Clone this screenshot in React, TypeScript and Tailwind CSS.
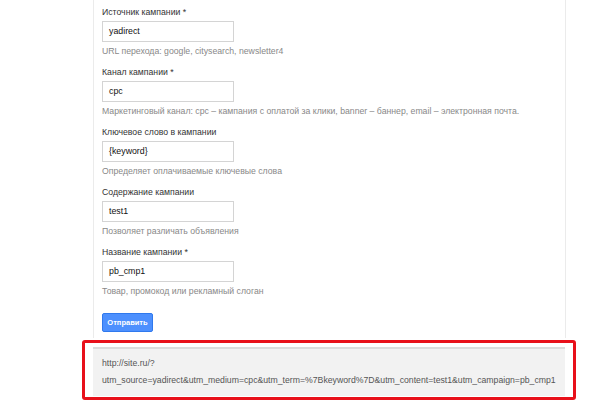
const fields = [
  { label: "Источник кампании", required: true, value: "yadirect", hint: "URL перехода: google, citysearch, newsletter4" },
  { label: "Канал кампании", required: true, value: "cpc", hint: "Маркетинговый канал: cpc – кампания с оплатой за клики, banner – баннер, email – электронная почта." },
  { label: "Ключевое слово в кампании", required: false, value: "{keyword}", hint: "Определяет оплачиваемые ключевые слова" },
  { label: "Содержание кампании", required: false, value: "test1", hint: "Позволяет различать объявления" },
  { label: "Название кампании", required: true, value: "pb_cmp1", hint: "Товар, промокод или рекламный слоган" },
];

export default function App() {
  return (
    <div className="relative w-[604px] h-[403px] overflow-hidden bg-white font-['Liberation_Sans',Arial,sans-serif] text-[8.7px]">
      {/* form panel */}
      <div className="ml-[93px] w-[473px] h-[338px] border-x border-[#ebebeb] pl-[8px] pt-[5px]">
        {fields.map((f) => (
          <div key={f.label} className="flex flex-col h-[60px]">
            <div className="h-[15px] leading-[15px] text-[#333]">
              {f.label}
              {f.required && " *"}
            </div>
            <div className="mt-[1px] w-[132px] h-[21px] border border-[#d4d4d4] bg-white pl-[6px] leading-[19px] text-[8.8px] text-[#111]">
              {f.value}
            </div>
            <div className="mt-[2px] h-[15px] leading-[15px] text-[#888]">{f.hint}</div>
          </div>
        ))}
        <button className="mt-[8px] h-[19px] w-[51px] rounded-[2px] border border-[#3079ed] bg-[#4d90fe] text-[7.5px] font-bold text-white leading-[17px]">
          Отправить
        </button>
      </div>

      {/* result */}
      <div className="ml-[93px] mt-[9px] w-[472px] h-[49px] bg-[#f2f2f2] border-t-2 border-[#dcdcdc] pl-[9px] pt-[6px] text-[#555] leading-[17px]">
        <div>http://site.ru/?</div>
        <div>utm_source=yadirect&amp;utm_medium=cpc&amp;utm_term=%7Bkeyword%7D&amp;utm_content=test1&amp;utm_campaign=pb_cmp1</div>
      </div>

      {/* annotation frame */}
      <div className="absolute left-[82px] top-[340px] w-[494px] h-[60px] rounded-[3px] border-[3px] border-[#e8101a]" />
    </div>
  );
}
